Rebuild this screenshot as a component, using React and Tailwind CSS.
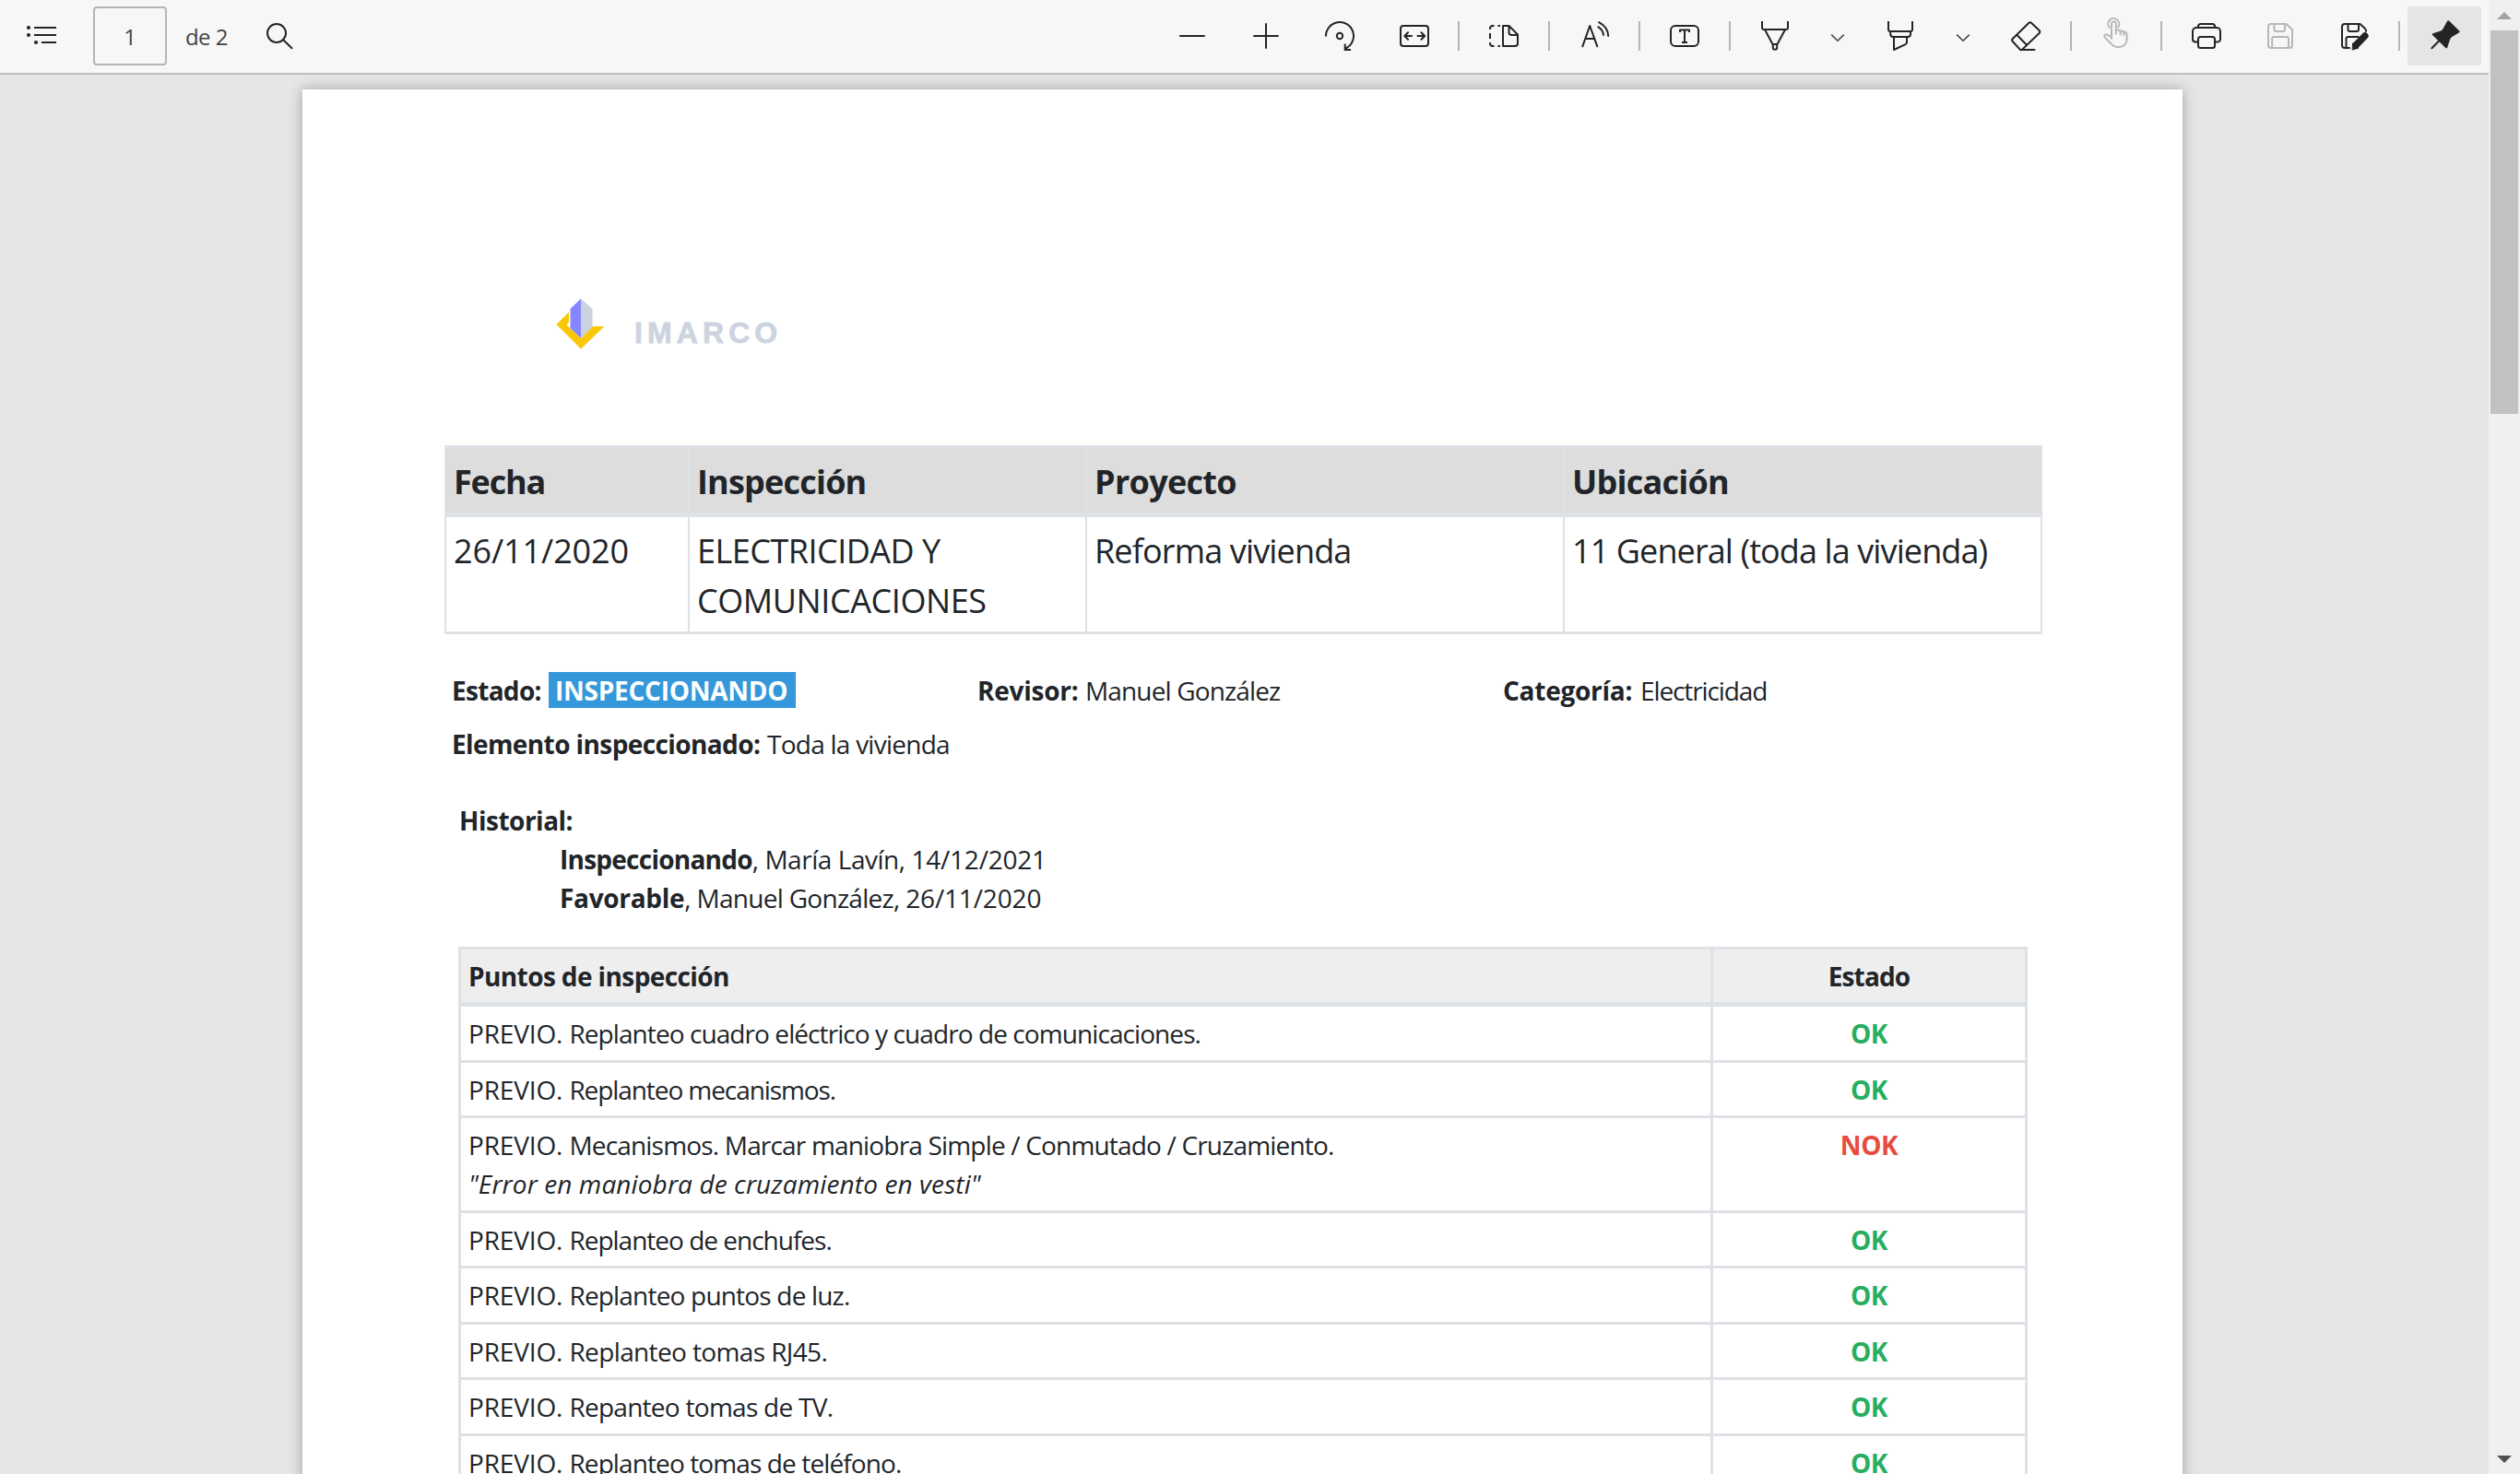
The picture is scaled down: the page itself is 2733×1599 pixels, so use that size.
import React from 'react';
import clsx from 'clsx';

const columns = [
  {
    title: 'Fecha',
    titleTracking: 'tracking-[-1.2px]',
    lines: ['26/11/2020'],
    tracking: ['tracking-[-0.1px]'],
  },
  {
    title: 'Inspección',
    titleTracking: 'tracking-[-0.8px]',
    lines: ['ELECTRICIDAD Y', 'COMUNICACIONES'],
    tracking: ['tracking-[-0.51px]', 'tracking-[-0.42px]'],
  },
  {
    title: 'Proyecto',
    titleTracking: 'tracking-[-0.7px]',
    lines: ['Reforma vivienda'],
    tracking: ['tracking-[-0.85px]'],
  },
  {
    title: 'Ubicación',
    titleTracking: 'tracking-[-0.75px]',
    lines: ['11 General (toda la vivienda)'],
    tracking: ['tracking-[-0.9px]'],
  },
];

const points = [
  { text: 'Replanteo cuadro eléctrico y cuadro de comunicaciones.', tracking: 'tracking-[-0.92px]', ok: true, height: 'h-[61px]' },
  { text: 'Replanteo mecanismos.', tracking: 'tracking-[-1.08px]', ok: true, height: 'h-[60px]' },
  {
    text: 'Mecanismos. Marcar maniobra Simple / Conmutado / Cruzamiento.',
    tracking: 'tracking-[-0.82px]',
    note: '"Error en maniobra de cruzamiento en vesti"',
    ok: false,
    height: 'h-[103px]',
  },
  { text: 'Replanteo de enchufes.', tracking: 'tracking-[-1px]', ok: true, height: 'h-[60px]' },
  { text: 'Replanteo puntos de luz.', tracking: 'tracking-[-0.81px]', ok: true, height: 'h-[61px]' },
  { text: 'Replanteo tomas RJ45.', tracking: 'tracking-[-0.62px]', ok: true, height: 'h-[60px]' },
  { text: 'Repanteo tomas de TV.', tracking: 'tracking-[-0.73px]', ok: true, height: 'h-[61px]' },
  { text: 'Replanteo tomas de teléfono.', tracking: 'tracking-[-0.89px]', ok: true, height: 'h-[60px]' },
];

/**
 * Icon - 32px line icon used across the toolbar.
 */
const Icon = ({ children, className }) => (
  <svg
    className={clsx('w-8 h-8 shrink-0 overflow-visible', className || 'text-[#242424]')}
    viewBox="0 0 32 32"
    fill="none"
    stroke="currentColor"
    strokeWidth={2}
    strokeLinecap="round"
    strokeLinejoin="round"
  >
    {children}
  </svg>
);

const ToolButton = ({ label, active, className, children }) => (
  <button
    aria-label={label}
    className={clsx('w-20 h-16 flex items-center justify-center rounded shrink-0', active && 'bg-[#e5e5e5]')}
  >
    <Icon className={className}>{children}</Icon>
  </button>
);

const ChevronButton = ({ label }) => (
  <button aria-label={label} className="w-14 h-16 flex items-center justify-center pt-1 shrink-0">
    <svg className="w-4 h-2 overflow-visible" viewBox="0 0 16 8" fill="none" stroke="#444" strokeWidth={1.5}>
      <path d="M1.2 0.6 8 7.3l6.8-6.7" />
    </svg>
  </button>
);

const Divider = () => <div className="w-0.5 h-8 mx-2 bg-[#b5b5b5] shrink-0" />;

const Toolbar = () => (
  <div className="h-[81px] border-b-2 border-[#bdbdbd] bg-[#f7f7f7] flex justify-between items-start pt-[7px] pl-[29px] pr-2">
    {/* Page navigation */}
    <div className="flex items-center h-16 text-2xl text-[#444]">
      <Icon>
        <path d="M9 7H31M9 15H31M17 23H31" strokeLinecap="square" />
        <g fill="currentColor" stroke="none">
          <circle cx="2" cy="7" r="2.1" />
          <circle cx="2" cy="15" r="2.1" />
          <circle cx="10" cy="23" r="2.1" />
        </g>
      </Icon>
      <div className="ml-10 w-20 h-16 border-2 border-[#b5b5b5] rounded flex items-center justify-center pt-0.5">1</div>
      <span className="ml-5 w-[86px] pt-0.5 tracking-[-0.56px] whitespace-nowrap">de 2</span>
      <Icon>
        <circle cx="13" cy="13" r="10" />
        <path d="M20.2 20.2 29.5 29.3" />
      </Icon>
    </div>

    {/* Tools */}
    <div className="flex items-center">
      <ToolButton label="Alejar">
        <path d="M3 16H29" />
      </ToolButton>
      <ToolButton label="Acercar">
        <path d="M3 16H29M16 3V29" />
      </ToolButton>
      <ToolButton label="Girar">
        <path d="M1 16.5A15 15 0 1 1 22.5 29.5M21.7 24.5V31H28" strokeLinecap="butt" strokeLinejoin="miter" />
        <circle cx="16" cy="16" r="3.2" />
      </ToolButton>
      <ToolButton label="Ajustar al ancho">
        <rect x="2" y="5" width="30" height="22" rx="3" />
        <path d="M14 16H6.5M10 12.2 6.3 16 10 19.8M20.5 16H28M24.5 12.2 28.2 16 24.5 19.8" />
      </ToolButton>
      <Divider />
      <ToolButton label="Vista de página">
        <path d="M15 5H21.5L31 14.5V24a3 3 0 0 1-3 3H15ZM21.5 5V12a3 3 0 0 0 3 3H31" />
        <path d="M5.5 5H4a3 3 0 0 0-3 3v1M1 13v6M1 23v1a3 3 0 0 0 3 3h1.5M9.5 5H12M9.5 27H12" strokeLinecap="butt" />
      </ToolButton>
      <Divider />
      <ToolButton label="Leer en voz alta">
        <path d="M3.3 27.3 11.2 5 19.3 27.3M6.3 19H16.3" />
        <path d="M21 1.2Q31 6.5 31.2 16M20.3 6.2Q25.5 9.5 26 15" />
      </ToolButton>
      <Divider />
      <ToolButton label="Agregar texto">
        <rect x="1" y="5" width="30" height="22" rx="5" />
        <path d="M11 12V9.4H21V12M16 9.5V23M13 23h6" strokeLinecap="butt" />
      </ToolButton>
      <Divider />
      <ToolButton label="Dibujar">
        <path d="M2 0V7a2 2 0 0 0 2 2H28a2 2 0 0 0 2-2V0M5.2 9.5 13.5 25M26.8 9.5 18.5 25" strokeLinecap="butt" />
        <path d="M13.8 25H18.2V28.5a2.2 2.2 0 0 1-4.4 0Z" />
      </ToolButton>
      <ChevronButton label="Opciones de lápiz" />
      <ToolButton label="Resaltar">
        <path d="M3 0V9a2 2 0 0 0 2 2H27a2 2 0 0 0 2-2V0" strokeLinecap="butt" />
        <path d="M5.2 11V14a3 3 0 0 0 3 3H24a3 3 0 0 0 3-3V11M9 17V31L21.5 25.2A2.5 2.5 0 0 0 23 23V17" strokeLinecap="butt" />
      </ToolButton>
      <ChevronButton label="Opciones de resaltador" />
      <ToolButton label="Borrar">
        <path d="M1.8 19 19.2 2a2.2 2.2 0 0 1 3 0L30.6 10a2.2 2.2 0 0 1 0 3L12.5 30.4a2.2 2.2 0 0 1-3 0L1.8 22a2.2 2.2 0 0 1 0-3ZM6.5 15 17.2 26M11 31H25.5" />
      </ToolButton>
      <Divider />
      <ToolButton label="Entrada táctil" className="text-[#b8b8b8]">
        <path d="M8.6 6.8A6 6 0 1 1 18.2 6.4" />
        <path d="M11 19V2.8a2.4 2.4 0 0 1 4.8 0V13.6M15.8 9.4h2.4a2.4 2.4 0 0 1 2.4 2.4v2.6M20.6 10.6h1.4a2.4 2.4 0 0 1 2.4 2.4v2M24.4 11.6a3 3 0 0 1 3.2 3V20a8 8 0 0 1-8 8h-2.2a8 8 0 0 1-5.6-2.4L4.2 18a2 2 0 0 1 2.4-3.2l4.4 2.4" />
      </ToolButton>
      <Divider />
      <ToolButton label="Imprimir">
        <path d="M7 7V5.5A2.5 2.5 0 0 1 9.5 3H22.5a2.5 2.5 0 0 1 2.5 2.5V7" />
        <path d="M7 22.5H4a3 3 0 0 1-3-3V11a4 4 0 0 1 4-4H27a4 4 0 0 1 4 4v8.5a3 3 0 0 1-3 3H25" />
        <rect x="7" y="17" width="18" height="12" rx="2.5" />
      </ToolButton>
      <ToolButton label="Guardar" className="text-[#b8b8b8]">
        <path d="M3 6a3 3 0 0 1 3-3H22.5L29 9V26a3 3 0 0 1-3 3H6a3 3 0 0 1-3-3Z" />
        <path d="M9.5 3V9a2 2 0 0 0 2 2h7.5a2 2 0 0 0 2-2V3M7.2 29V19a2 2 0 0 1 2-2H23a2 2 0 0 1 2 2V29" />
      </ToolButton>
      <ToolButton label="Guardar como">
        <path d="M11 29H6a3 3 0 0 1-3-3V6a3 3 0 0 1 3-3H22.5L27.5 7.5A4 4 0 0 1 29 10.5V11" />
        <path d="M9.5 3V9a2 2 0 0 0 2 2h7.5a2 2 0 0 0 2-2V3M7.5 29V19a2 2 0 0 1 2-2H20.5" />
        <path d="M27.8 16 18.2 25.8" strokeWidth={7.5} />
        <path d="M15 24 21 29 14.5 31Z" fill="currentColor" strokeWidth={1} />
      </ToolButton>
      <Divider />
      <ToolButton label="Anclar barra" active>
        <path
          d="M19 0Q20 -1.2 21.3 -0.2L32.2 10.5Q33.2 11.8 31.8 12.5L24.2 17Q22.6 18 22.2 19.5L19.2 28.5Q18.5 30 17.4 29L3 15Q2.2 13.8 3.5 13.3L12 10.5Q13.5 10 14.3 8.5Z"
          fill="currentColor"
          stroke="none"
        />
        <path d="M10 21.5 2.4 29.3" />
      </ToolButton>
    </div>
  </div>
);

const Logo = () => (
  <div className="ml-[275px] flex h-[55px] items-start">
    <svg className="w-[53px] h-[55px]" viewBox="0 0 53 55">
      <path d="M14 14.5 0.5 28 27 54.5 52.5 30H39.5L27 43 11.5 28.5 14 25.5Z" fill="#f8c807" />
      <path d="M27 0 15.5 11V32L27 43Z" fill="#8585ff" />
      <path d="M27 0 39.5 11V30.5L27 43Z" fill="#cbd1df" />
    </svg>
    <span className="ml-8 mt-[19px] text-[32px] leading-9 font-bold tracking-[5.1px] text-[#cdd3e0] [-webkit-text-stroke:0.8px_#cdd3e0] font-['Liberation_Sans',sans-serif]">
      IMARCO
    </span>
  </div>
);

const SummaryTable = () => (
  <div className="ml-[154px] mt-[104px] w-[1733px] h-[205px] border-y-[3px] border-r-2 border-[#dee2e6] grid grid-cols-[264px_431px_518px_518px] grid-rows-[75px_124px] text-4xl leading-[54px]">
    {columns.map((col) => (
      <div key={col.title} className={clsx('border-l-2 border-b-[5px] border-[#dee2e6] bg-[#ddd] pl-2 pt-2.5 font-bold', col.titleTracking)}>
        {col.title}
      </div>
    ))}
    {columns.map((col) => (
      <div key={col.title} className="border-l-2 border-[#dee2e6] pl-2 pt-2.5 whitespace-nowrap">
        {col.lines.map((line, i) => (
          <div key={line} className={col.tracking[i]}>{line}</div>
        ))}
      </div>
    ))}
  </div>
);

const Details = () => (
  <div className="ml-[162px] mt-10">
    <div className="grid grid-cols-[570px_570px_400px]">
      <div className="flex">
        <b className="w-[105px] tracking-[-0.7px]">Estado:</b>
        <b className="mt-px h-[39px] w-[268px] pl-[7px] leading-10 bg-[#3498db] text-white tracking-[-0.25px]">INSPECCIONANDO</b>
      </div>
      <div className="flex">
        <b className="w-[117px] tracking-[-0.25px]">Revisor:</b>
        <span className="tracking-[-0.85px]">Manuel González</span>
      </div>
      <div className="flex">
        <b className="w-[149px] tracking-[-0.25px]">Categoría:</b>
        <span className="tracking-[-1.1px]">Electricidad</span>
      </div>
    </div>
    <div className="flex mt-4">
      <b className="w-[342px] tracking-[-0.6px]">Elemento inspeccionado:</b>
      <span className="tracking-[-0.75px]">Toda la vivienda</span>
    </div>

    {/* Status history */}
    <div className="ml-2 mt-[41px]">
      <b className="block tracking-[-0.5px]">Historial:</b>
      <div className="ml-[109px]">
        <b className="tracking-[-0.75px]">Inspeccionando</b>
        <span className="tracking-[-0.46px]">, María Lavín, </span>
        <span className="tracking-[-0.22px]">14/12/2021</span>
      </div>
      <div className="ml-[109px]">
        <b className="tracking-[-0.3px]">Favorable</b>
        <span className="tracking-[-0.7px]">, Manuel González, </span>
        <span className="tracking-[-0.15px]">26/11/2020</span>
      </div>
    </div>
  </div>
);

const PointsTable = () => (
  <div className="ml-[169px] mt-8 w-[1702px] border-t-[3px] border-x-[3px] border-[#dee2e6]">
    <div className="grid grid-cols-[1355px_341px] h-[62px] bg-[#eee] border-b-[5px] border-[#dee2e6] font-bold">
      <div className="pl-2 pt-2 tracking-[-0.6px]">Puntos de inspección</div>
      <div className="border-l-[3px] border-[#dee2e6] pt-2 text-center tracking-[-0.88px]">Estado</div>
    </div>
    {points.map((point) => (
      <div key={point.text} className={clsx('grid grid-cols-[1355px_341px] border-b-[3px] border-[#dee2e6]', point.height)}>
        <div className="pl-2 pt-2">
          <div className={point.tracking}>
            <span className="tracking-[-0.15px]">PREVIO. </span>
            {point.text}
          </div>
          {point.note && <div className="italic tracking-[0.11px]">{point.note}</div>}
        </div>
        <div className={clsx('border-l-[3px] border-[#dee2e6] pt-2 text-center font-bold tracking-[-0.4px]', point.ok ? 'text-[#27ae60]' : 'text-[#e74c3c]')}>
          {point.ok ? 'OK' : 'NOK'}
        </div>
      </div>
    ))}
  </div>
);

const Scrollbar = () => (
  <div className="w-[34px] h-full bg-[#f0f0f0] flex flex-col items-center pt-[13px] pb-3 shrink-0">
    <svg className="w-4 h-2" viewBox="0 0 16 8"><path d="M0 8 8 0l8 8z" fill="#a3a3a3" /></svg>
    <div className="mt-3 w-[30px] h-[416px] bg-[#c1c1c1]" />
    <svg className="w-4 h-2 mt-auto" viewBox="0 0 16 8"><path d="M0 0h16L8 8z" fill="#505050" /></svg>
  </div>
);

const App = () => (
  <div className="h-screen flex overflow-hidden bg-[#e6e6e6] font-['Open_Sans','Noto_Sans',sans-serif]">
    <div className="flex-1 min-w-0 flex flex-col">
      <Toolbar />
      <div className="flex-1 min-h-0 overflow-hidden pt-4 pl-[328px]">
        <div className="w-[2039px] h-[2880px] bg-white shadow-[0_0_14px_rgba(0,0,0,0.3)] pt-[227px] text-[28px] leading-[42px] text-[#212529]">
          <Logo />
          <SummaryTable />
          <Details />
          <PointsTable />
        </div>
      </div>
    </div>
    <Scrollbar />
  </div>
);

export default App;
